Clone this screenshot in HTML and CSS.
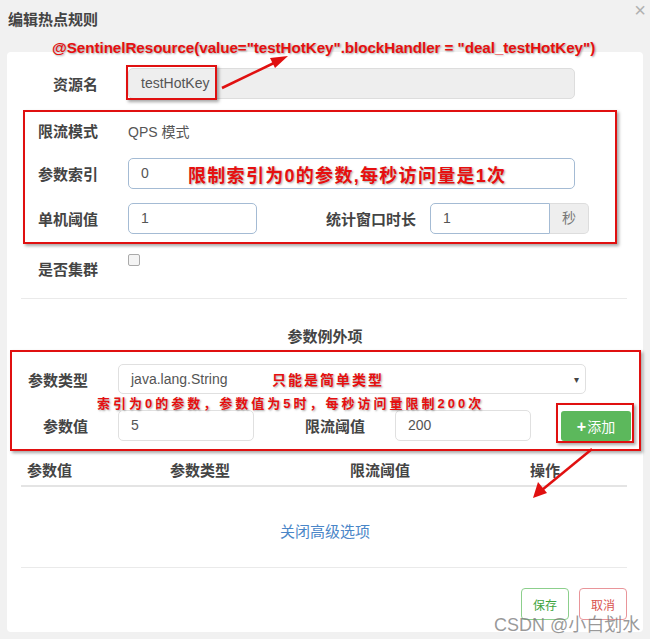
FILE: index.html
```html
<!DOCTYPE html>
<html lang="zh-CN">
<head>
    <meta charset="UTF-8">
    <meta name="viewport" content="width=device-width, initial-scale=1.0">
    <title>编辑热点规则</title>
    <link rel="stylesheet" href="styles.css">
</head>
<body>
    <div class="dialog">
        <div class="dialog-header">
            <span class="dialog-title">编辑热点规则</span>
            <span class="close">&times;</span>
        </div>

        <div class="panel">
            <div class="row row-first">
                <label class="label">资源名</label>
                <div class="input input-readonly input-wide">testHotKey</div>
            </div>
            <div class="row row-mode">
                <label class="label">限流模式</label>
                <span class="static">QPS 模式</span>
            </div>
            <div class="row row-index">
                <label class="label">参数索引</label>
                <div class="input input-focus input-wide">0</div>
            </div>
            <div class="row row-threshold">
                <label class="label">单机阈值</label>
                <div class="input input-focus input-short">1</div>
                <label class="label label-window">统计窗口时长</label>
                <div class="input-group">
                    <div class="input input-focus input-window">1</div>
                    <span class="addon">秒</span>
                </div>
            </div>
            <div class="row row-cluster">
                <label class="label">是否集群</label>
                <span class="checkbox"></span>
            </div>

            <div class="divider"></div>

            <div class="section-title">参数例外项</div>

            <div class="row row-type">
                <label class="label label-ex">参数类型</label>
                <div class="input select">java.lang.String<span class="caret">&#9662;</span></div>
            </div>
            <div class="row row-value">
                <label class="label label-ex">参数值</label>
                <div class="input input-value">5</div>
                <label class="label label-limit">限流阈值</label>
                <div class="input input-value">200</div>
                <button class="btn-add"><span class="plus">+</span>添加</button>
            </div>

            <div class="table-head">
                <span>参数值</span>
                <span>参数类型</span>
                <span>限流阈值</span>
                <span>操作</span>
            </div>

            <div class="toggle-link">关闭高级选项</div>

            <div class="divider divider-bottom"></div>

            <div class="footer">
                <button class="btn btn-save">保存</button>
                <button class="btn btn-cancel">取消</button>
            </div>
        </div>
    </div>

    <!-- annotations drawn over the screenshot -->
    <div class="note note-top">@SentinelResource(value="testHotKey".blockHandler = "deal_testHotKey")</div>
    <div class="note note-index">限制索引为0的参数,每秒访问量是1次</div>
    <div class="note note-type">只能是简单类型</div>
    <div class="note note-value">索引为0的参数，参数值为5时，每秒访问量限制200次</div>

    <div class="mark mark-resource"></div>
    <div class="mark mark-rule"></div>
    <div class="mark mark-except"></div>
    <div class="mark mark-add"></div>

    <svg class="arrows" width="650" height="639" viewBox="0 0 650 639">
        <line x1="222" y1="88" x2="276" y2="62" stroke="#e01010" stroke-width="2.5"/>
        <polygon points="288,56 270,58 275,68" fill="#e01010"/>
        <line x1="592" y1="449" x2="542" y2="490" stroke="#e01010" stroke-width="2.5"/>
        <polygon points="533,498 538,482 547,493" fill="#e01010"/>
    </svg>

    <div class="watermark">CSDN @小白划水</div>
</body>
</html>
```

FILE: styles.css
```css
body {
    margin: 0;
    padding: 0;
    width: 650px;
    height: 639px;
    overflow: hidden;
    position: relative;
    background: #f1f1f1;
    color: #333;
    font-family: "Liberation Sans", "Noto Sans CJK SC", sans-serif;
    font-size: 14px;
}

.dialog-header {
    height: 52px;
    box-sizing: border-box;
    padding: 11px 8px 0;
    position: relative;
}

.dialog-title {
    font-size: 15px;
    font-weight: bold;
    color: #444;
    line-height: 18px;
}

.close {
    position: absolute;
    right: 4px;
    top: 0;
    font-size: 20px;
    color: #b0b0b0;
    line-height: 20px;
}

.panel {
    margin: 0 7px;
    height: 580px;
    box-sizing: border-box;
    padding-top: 16px;
    background: #fff;
    border-radius: 4px;
}

.row {
    display: flex;
    align-items: center;
    height: 31px;
}

.row-mode { margin-top: 16px; }
.row-index { margin-top: 12px; }
.row-threshold { margin-top: 14px; }
.row-cluster {
    margin-top: 20px;
    height: 28px;
    align-items: flex-start;
}

.label {
    width: 91px;
    margin-right: 30px;
    text-align: right;
    font-size: 15px;
    font-weight: bold;
    color: #444;
    flex-shrink: 0;
}

.row-cluster .label {
    padding-top: 4px;
}

.label-window {
    width: 159px;
    margin-right: 14px;
}

.label-ex {
    width: 81px;
}

.label-limit {
    width: 111px;
}

.static {
    color: #555;
    font-size: 14px;
}

.input {
    height: 31px;
    box-sizing: border-box;
    border: 1px solid #d6d6d6;
    border-radius: 5px;
    padding: 0 12px;
    line-height: 29px;
    color: #555;
    font-size: 14px;
    background: #fff;
    flex-shrink: 0;
}

.input-readonly {
    background: #eee;
    border-color: #ddd;
}

.input-focus {
    border-color: #a4bbd4;
}

.input-wide { width: 447px; }
.input-short { width: 129px; }

.input-group {
    display: flex;
}

.input-window {
    width: 120px;
    border-radius: 5px 0 0 5px;
}

.addon {
    width: 39px;
    height: 31px;
    box-sizing: border-box;
    border: 1px solid #ddd;
    border-left: none;
    border-radius: 0 5px 5px 0;
    background: #eee;
    color: #777;
    text-align: center;
    line-height: 29px;
}

.checkbox {
    width: 10px;
    height: 10px;
    border: 1px solid #aaa;
    border-radius: 2px;
    background: #f4f4f4;
}

.divider {
    height: 1px;
    background: #eaeaea;
    margin: 16px 16px 0 14px;
}

.section-title {
    margin-top: 28px;
    text-align: center;
    font-size: 15px;
    font-weight: bold;
    color: #444;
    line-height: 20px;
}

.row-type {
    margin-top: 17px;
    height: 30px;
}

.select {
    width: 468px;
    height: 30px;
    position: relative;
    border-color: #e0e0e0;
}

.caret {
    position: absolute;
    right: 6px;
    top: 0;
    font-size: 10px;
    color: #444;
}

.row-value {
    margin-top: 16px;
}

.input-value {
    width: 136px;
    border-color: #e0e0e0;
}

.btn-add {
    margin-left: 30px;
    width: 70px;
    height: 30px;
    border: none;
    border-radius: 3px;
    background: #5cb85c;
    color: #fff;
    font-family: inherit;
    font-size: 14px;
    padding: 0;
}

.plus {
    font-weight: bold;
    font-size: 16px;
    margin-right: 1px;
}

.table-head {
    margin: 16px 16px 0 14px;
    height: 30px;
    box-sizing: border-box;
    border-bottom: 2px solid #e4e4e4;
    display: grid;
    grid-template-columns: 143px 180px 180px 1fr;
    padding-left: 6px;
    font-size: 15px;
    font-weight: bold;
    color: #444;
    line-height: 28px;
}

.toggle-link {
    margin-top: 35px;
    text-align: center;
    color: #4a86c8;
    font-size: 15px;
    line-height: 20px;
}

.divider-bottom {
    margin-top: 25px;
}

.footer {
    display: flex;
    justify-content: flex-end;
    gap: 10px;
    margin: 20px 16px 0 0;
}

.btn {
    width: 48px;
    height: 32px;
    border-radius: 4px;
    background: #fff;
    font-family: inherit;
    font-size: 12px;
    padding: 0;
}

.btn-save {
    border: 1px solid #8ccf8c;
    color: #3ea43e;
}

.btn-cancel {
    border: 1px solid #e9959a;
    color: #d9534f;
}

/* annotations */
.note {
    position: absolute;
    color: #e60f0f;
    font-weight: bold;
    white-space: nowrap;
    text-shadow: 1px 1px 2px rgba(0, 0, 0, 0.35);
}

.note-top {
    left: 52px;
    top: 39px;
    font-size: 15.2px;
    letter-spacing: -0.05px;
}

.note-index {
    left: 188px;
    top: 161px;
    font-size: 18px;
    letter-spacing: 1.3px;
}

.note-type {
    left: 272px;
    top: 369px;
    font-size: 14px;
    letter-spacing: 2px;
}

.note-value {
    left: 97px;
    top: 393px;
    font-size: 13px;
    letter-spacing: 3px;
}

.mark {
    position: absolute;
    border: 2px solid #e01010;
    box-shadow: 2px 2px 3px rgba(0, 0, 0, 0.35);
    box-sizing: border-box;
}

.mark-resource { left: 126px; top: 65px; width: 91px; height: 35px; }
.mark-rule { left: 23px; top: 110px; width: 594px; height: 134px; }
.mark-except { left: 10px; top: 350px; width: 631px; height: 101px; }
.mark-add { left: 556px; top: 403px; width: 78px; height: 40px; }

.arrows {
    position: absolute;
    left: 0;
    top: 0;
    pointer-events: none;
}

.watermark {
    position: absolute;
    left: 494px;
    top: 610px;
    font-size: 18px;
    color: rgba(120, 120, 120, 0.75);
    white-space: nowrap;
}
```
